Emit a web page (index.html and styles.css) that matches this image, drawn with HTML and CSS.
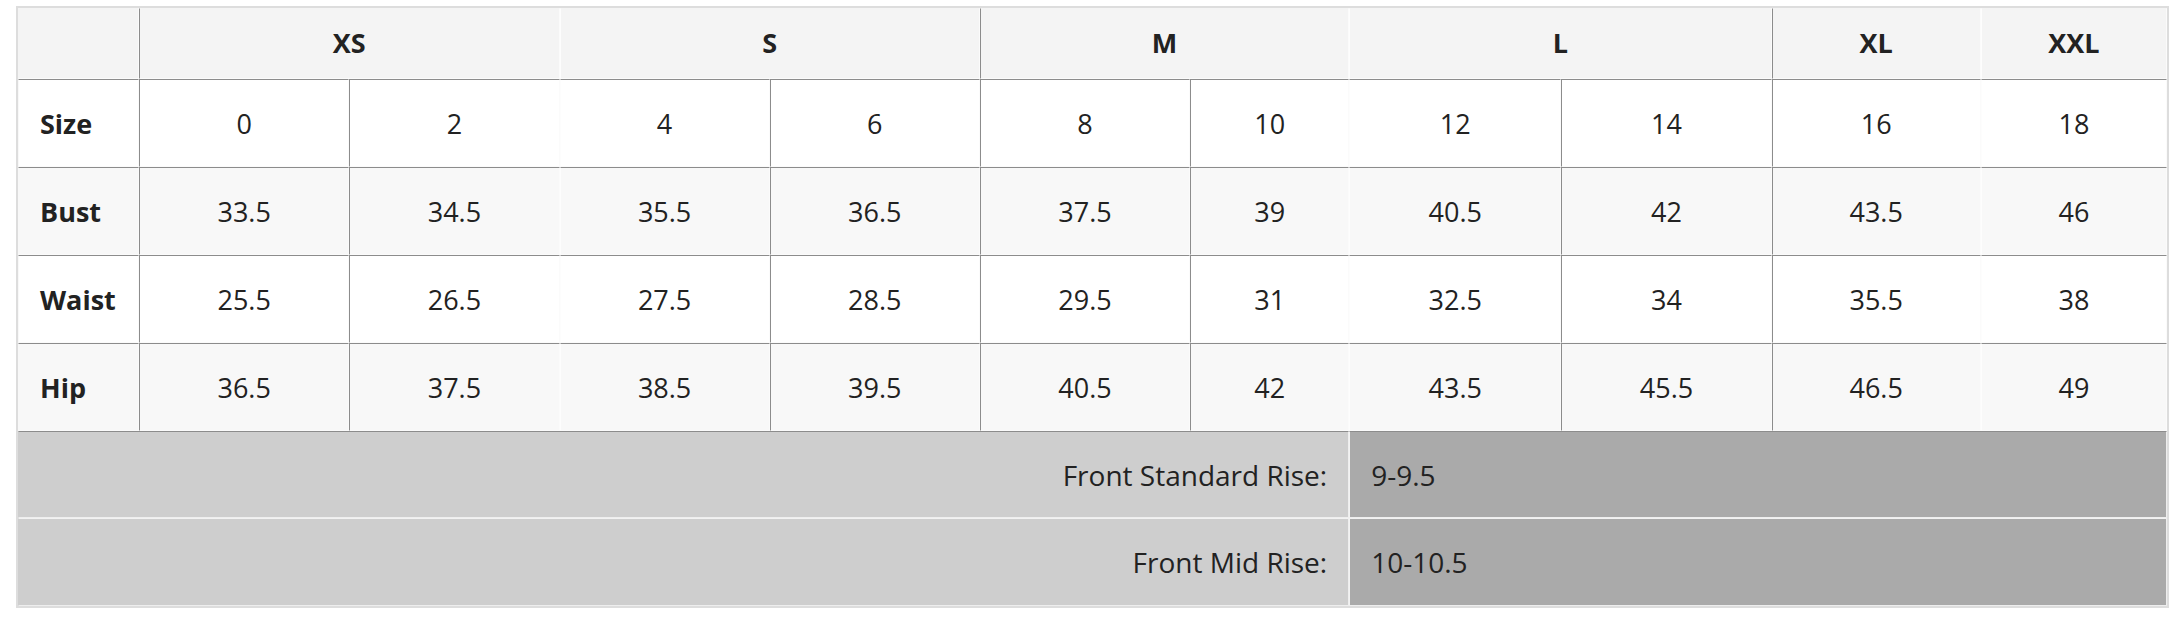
FILE: index.html
```html
<!DOCTYPE html>
<html lang="en">
<head>
<meta charset="utf-8">
<title>Size Chart</title>
<link rel="stylesheet" href="styles.css">
</head>
<body>
<div class="page">
  <table class="chart">
    <colgroup>
      <col class="c-label">
      <col class="c-std"><col class="c-std"><col class="c-std"><col class="c-std"><col class="c-std">
      <col class="c-narrow">
      <col class="c-wide"><col class="c-std"><col class="c-xl"><col class="c-xxl">
    </colgroup>
    <tr class="head">
      <th class="corner"></th>
      <th colspan="2">XS</th>
      <th colspan="2" class="soft">S</th>
      <th colspan="2">M</th>
      <th colspan="2" class="soft">L</th>
      <th>XL</th>
      <th class="soft">XXL</th>
    </tr>
    <tr class="row-white">
      <th class="label">Size</th>
      <td>0</td><td>2</td><td class="soft">4</td><td>6</td><td>8</td><td>10</td><td class="soft">12</td><td>14</td><td>16</td><td class="soft">18</td>
    </tr>
    <tr class="row-grey">
      <th class="label">Bust</th>
      <td>33.5</td><td>34.5</td><td class="soft">35.5</td><td>36.5</td><td>37.5</td><td>39</td><td class="soft">40.5</td><td>42</td><td>43.5</td><td class="soft">46</td>
    </tr>
    <tr class="row-white">
      <th class="label">Waist</th>
      <td>25.5</td><td>26.5</td><td class="soft">27.5</td><td>28.5</td><td>29.5</td><td>31</td><td class="soft">32.5</td><td>34</td><td>35.5</td><td class="soft">38</td>
    </tr>
    <tr class="row-grey">
      <th class="label">Hip</th>
      <td>36.5</td><td>37.5</td><td class="soft">38.5</td><td>39.5</td><td>40.5</td><td>42</td><td class="soft">43.5</td><td>45.5</td><td>46.5</td><td class="soft">49</td>
    </tr>
    <tr class="rise first-rise">
      <td colspan="7" class="rise-label">Front Standard Rise:</td>
      <td colspan="4" class="rise-value">9-9.5</td>
    </tr>
    <tr class="rise">
      <td colspan="7" class="rise-label">Front Mid Rise:</td>
      <td colspan="4" class="rise-value">10-10.5</td>
    </tr>
  </table>
</div>
</body>
</html>
```
FILE: styles.css
```css
html, body {
  margin: 0;
  padding: 0;
  background: #ffffff;
}

.page {
  padding: 6px 15px 0 16px;
  font-family: "Open Sans", "Liberation Sans", sans-serif;
  color: #222222;
}

.chart {
  width: 100%;
  table-layout: fixed;
  border-collapse: separate;
  border-spacing: 0;
  border: 2px solid #dddddd;
  font-size: 27px;
}

.c-label { width: 121px; }
.c-std { width: 210px; }
.c-narrow { width: 159px; }
.c-wide { width: 212px; }
.c-xl { width: 209px; }
.c-xxl { width: 186px; }

.chart th,
.chart td {
  box-sizing: border-box;
  padding: 0;
  text-align: center;
  vertical-align: middle;
  border-top: 1px solid #8c8c8c;
  border-left: 1px solid #8c8c8c;
  border-right: 1px solid #fbfbfb;
  border-bottom: 1px solid #fbfbfb;
}

.chart th {
  font-weight: 700;
}

.chart td {
  font-weight: 400;
}

.chart .soft {
  border-left-color: #fdfdfd;
}

.head th {
  height: 71px;
  padding-bottom: 3px;
  background: #f4f4f4;
  border-top-color: #f4f4f4;
}

.head .corner {
  border-left-color: #f4f4f4;
}

.row-white th,
.row-white td {
  height: 88px;
  background: #ffffff;
}

.row-grey th,
.row-grey td {
  height: 88px;
  background: #f8f8f8;
}

.chart .label {
  text-align: left;
  padding-left: 21px;
  border-left-color: #f8f8f8;
}

.rise td {
  height: 88px;
  font-size: 28px;
  border-top-color: #f2f2f2;
  border-left-color: #f2f2f2;
  border-right-color: #eeeeee;
  border-bottom-color: #eeeeee;
}

.first-rise td {
  height: 87px;
  border-top-color: #8c8c8c;
}

.chart .rise-label {
  background: #cecece;
  text-align: right;
  padding-right: 21px;
  border-left-color: #cecece;
}

.chart .rise-value {
  background: #aaaaaa;
  text-align: left;
  padding-left: 21px;
}
```
